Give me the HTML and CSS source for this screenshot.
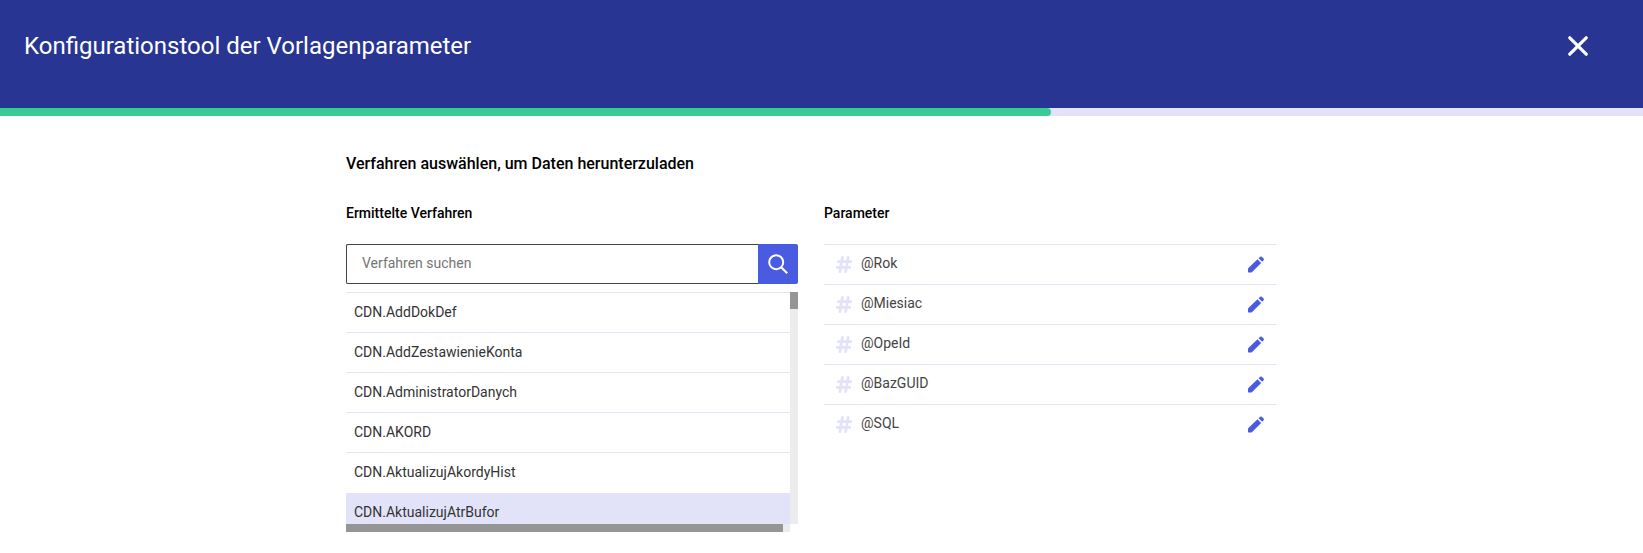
FILE: index.html
```html
<!DOCTYPE html>
<html lang="de">
<head>
<meta charset="utf-8">
<title>Konfigurationstool der Vorlagenparameter</title>
<link rel="stylesheet" href="styles.css">
</head>
<body>
<svg class="sprite" aria-hidden="true">
  <symbol id="hash" viewBox="0 0 16 17"><path d="M6.3 1.5 3.9 15.5M12.1 1.5 9.7 15.5M2.2 5.7H14.8M1.2 11.3H13.8" fill="none" stroke="currentColor" stroke-width="2.8" stroke-linecap="round"/></symbol>
  <symbol id="pencil" viewBox="0 0 16 17"><path d="M0 15.8V13.2Q0 12.6.5 12.1L9.5 3.3 13.2 6.9 4.1 16Q3.6 16.5 3 16.5H.7Q0 16.5 0 15.8ZM10.6 2.3 12.2.8Q13 0 13.8.8L15.6 2.6Q16.3 3.4 15.6 4.2L14.2 5.8Z" fill="currentColor"/></symbol>
</svg>
<header class="header">
  <h1 class="title">Konfigurationstool der Vorlagenparameter</h1>
  <button class="close" aria-label="Schließen"><svg width="20" height="20" viewBox="0 0 20 20"><path d="M1.8 1.8 18.2 18.2M18.2 1.8 1.8 18.2" fill="none" stroke="currentColor" stroke-width="3.2" stroke-linecap="round"/></svg></button>
</header>
<div class="progress"><div class="progress-fill"></div></div>
<main class="content">
  <h2 class="heading">Verfahren auswählen, um Daten herunterzuladen</h2>
  <div class="columns">
    <section>
      <h3 class="label">Ermittelte Verfahren</h3>
      <div class="search">
        <input class="search-input" type="text" placeholder="Verfahren suchen">
        <button class="search-button" aria-label="Suchen"><svg width="20" height="20" viewBox="0 0 20 20"><circle cx="8.2" cy="8.2" r="7" fill="none" stroke="currentColor" stroke-width="2"/><path d="M13.2 13.2 19.2 19.2" stroke="currentColor" stroke-width="2.1"/></svg></button>
      </div>
      <div class="list">
        <ul class="rows">
          <li class="row">CDN.AddDokDef</li>
          <li class="row">CDN.AddZestawienieKonta</li>
          <li class="row">CDN.AdministratorDanych</li>
          <li class="row">CDN.AKORD</li>
          <li class="row">CDN.AktualizujAkordyHist</li>
          <li class="row selected">CDN.AktualizujAtrBufor</li>
        </ul>
        <div class="track-v"><div class="thumb-v"></div></div>
        <div class="track-h"><div class="thumb-h"></div></div>
      </div>
    </section>
    <section>
      <h3 class="label">Parameter</h3>
      <ul class="params">
        <li class="param"><svg class="hash"><use href="#hash"/></svg><span class="name">@Rok</span><svg class="pencil"><use href="#pencil"/></svg></li>
        <li class="param"><svg class="hash"><use href="#hash"/></svg><span class="name">@Miesiac</span><svg class="pencil"><use href="#pencil"/></svg></li>
        <li class="param"><svg class="hash"><use href="#hash"/></svg><span class="name">@OpeId</span><svg class="pencil"><use href="#pencil"/></svg></li>
        <li class="param"><svg class="hash"><use href="#hash"/></svg><span class="name">@BazGUID</span><svg class="pencil"><use href="#pencil"/></svg></li>
        <li class="param"><svg class="hash"><use href="#hash"/></svg><span class="name">@SQL</span><svg class="pencil"><use href="#pencil"/></svg></li>
      </ul>
    </section>
  </div>
</main>
</body>
</html>
```
FILE: styles.css
```css
* { box-sizing: border-box; }
body { margin: 0; background: #fff; color: #000; font: 14px/20px Roboto, sans-serif; overflow: hidden; }
h1, h2, h3, ul { margin: 0; padding: 0; list-style: none; }
button { border: 0; padding: 0; display: flex; align-items: center; justify-content: center; }
.sprite { display: none; }
.header { height: 108px; padding: 30px 55px 0 24px; display: flex; justify-content: space-between; align-items: flex-start; background: #283593; color: #fff; }
.title { font-size: 24px; line-height: 32px; font-weight: 400; }
.close { background: none; color: inherit; height: 32px; }
.progress { height: 8px; background: #e3e2f9; }
.progress-fill { width: 1051px; height: 8px; background: #38cb94; border-radius: 0 4px 4px 0; }
.content { width: 930px; margin-left: 346px; padding-top: 36px; }
.heading { font-size: 16px; line-height: 24px; font-weight: 500; }
.columns { display: grid; grid-template-columns: 452px 452px; gap: 26px; padding-top: 27px; }
.label { font-size: 14px; line-height: 20px; font-weight: 500; margin-bottom: 21px; }
.search { display: flex; height: 40px; }
.search-input { flex: 1; min-width: 0; border: 1px solid #444; border-right: 0; border-radius: 2px 0 0 2px; padding: 0 15px 2px; font: 14px Roboto, sans-serif; color: #444; outline: 0; }
.search-input::placeholder { color: #757575; }
.search-button { width: 40px; background: #495be0; color: #fff; border-radius: 0 2px 2px 0; }
.list { display: grid; grid-template: 232px 8px / 444px 8px; margin-top: 8px; }
.rows { overflow: hidden; }
.row { height: 40px; border-top: 1px solid #e3e2f9; padding: 9px 8px 0; color: #333; }
.selected { background: #e2e3f8 padding-box; border-color: transparent; }
.track-v, .track-h { background: #ececec; }
.thumb-v { height: 17px; background: #959595; }
.thumb-h { width: 437px; height: 8px; background: #959595; }
.param { display: flex; height: 40px; border-top: 1px solid #e3e2f9; padding: 0 12px; color: #444; }
.hash, .pencil { width: 16px; height: 17px; margin-top: 11px; }
.hash { color: #e3e2f9; }
.pencil { color: #495be0; }
.name { flex: 1; margin-left: 9px; padding-top: 8px; }
```
